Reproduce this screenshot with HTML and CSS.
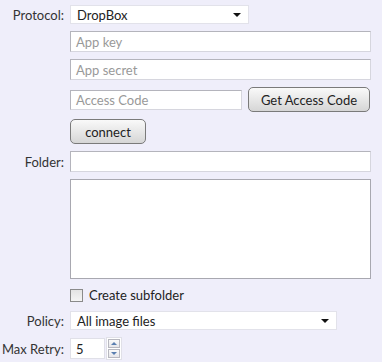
FILE: index.html
```html
<!DOCTYPE html>
<html lang="en">
  <head>
    <meta charset="UTF-8" />
    <title>Upload settings</title>
    <link rel="stylesheet" href="styles.css">
  </head>
  <body>
    <div class="form">
      <label class="label">Protocol:</label>
      <div class="select short">
        <span>DropBox</span>
        <span class="caret"></span>
      </div>

      <span></span>
      <div class="input wide placeholder">App key</div>

      <span></span>
      <div class="input wide placeholder">App secret</div>

      <span></span>
      <div class="access-row">
        <div class="input access placeholder">Access Code</div>
        <button class="btn get-code">Get Access Code</button>
      </div>

      <span></span>
      <div><button class="btn connect">connect</button></div>

      <label class="label">Folder:</label>
      <div class="input wide"></div>

      <span></span>
      <div class="textarea"></div>

      <span></span>
      <div class="check-row">
        <span class="checkbox"></span>
        <span>Create subfolder</span>
      </div>

      <label class="label">Policy:</label>
      <div class="select policy">
        <span>All image files</span>
        <span class="caret"></span>
      </div>

      <label class="label">Max Retry:</label>
      <div class="spin">
        <div class="spin-input">5</div>
        <div class="spin-buttons">
          <span class="spin-btn up"></span>
          <span class="spin-btn down"></span>
        </div>
      </div>
    </div>
  </body>
</html>
```

FILE: styles.css
```css
* {
  margin: 0;
  padding: 0;
  box-sizing: border-box;
}

body {
  background: #efeefa;
  font-family: Lato, "Open Sans", sans-serif;
  font-size: 13px;
  color: #333;
  width: 382px;
  height: 362px;
  overflow: hidden;
}

.form {
  display: grid;
  grid-template-columns: 64px 301px;
  column-gap: 6px;
  row-gap: 7px;
  padding-top: 5px;
  align-items: center;
}

.label {
  text-align: right;
  white-space: nowrap;
}

.select {
  height: 19px;
  background: #fff;
  border: 1px solid #e2e2ea;
  display: flex;
  align-items: center;
  justify-content: space-between;
  padding: 0 7px 0 6px;
  color: #222;
}

.select.short {
  width: 179px;
}

.select.policy {
  width: 267px;
}

.caret {
  width: 0;
  height: 0;
  border-left: 4px solid transparent;
  border-right: 4px solid transparent;
  border-top: 4px solid #111;
}

.input {
  height: 21px;
  background: #fff;
  border: 1px solid #d6d6de;
  border-top-color: #b4b4bc;
  border-left-color: #b4b4bc;
  padding: 0 5px;
  display: flex;
  align-items: center;
}

.input.wide {
  width: 301px;
}

.placeholder {
  color: #999;
}

.access-row {
  display: flex;
  align-items: center;
  gap: 6px;
}

.input.access {
  width: 172px;
  height: 20px;
}

.btn {
  height: 25px;
  border: 1px solid #7a7a7a;
  border-radius: 5px;
  background: linear-gradient(#f9f9f9, #d6d6d6);
  font-family: inherit;
  font-size: 13px;
  color: #222;
}

.btn.get-code {
  width: 122px;
}

.btn.connect {
  width: 76px;
}

.textarea {
  width: 301px;
  height: 100px;
  background: #fff;
  border: 1px solid #a8a8b0;
}

.check-row {
  display: flex;
  align-items: center;
  gap: 6px;
  height: 18px;
  color: #222;
}

.checkbox {
  width: 13px;
  height: 13px;
  border: 1px solid #8a8a8a;
  background: linear-gradient(#e4e4e4, #f4f4f4);
}

.spin {
  display: flex;
  align-items: center;
  gap: 1px;
}

.spin-input {
  width: 35px;
  height: 21px;
  background: #fff;
  border: 1px solid #e0e0e8;
  padding: 0 5px;
  display: flex;
  align-items: center;
  color: #222;
}

.spin-buttons {
  display: flex;
  flex-direction: column;
  gap: 1px;
  padding: 1px;
  background: #fff;
  border: 1px solid #e0e0e8;
}

.spin-btn {
  width: 12px;
  height: 9px;
  border: 1px solid #b8b8c0;
  background: linear-gradient(#fafafa, #e6e6ea);
  display: flex;
  align-items: center;
  justify-content: center;
}

.spin-btn::after {
  content: "";
  width: 0;
  height: 0;
  border-left: 3px solid transparent;
  border-right: 3px solid transparent;
}

.spin-btn.up::after {
  border-bottom: 3px solid #5a7fb0;
}

.spin-btn.down::after {
  border-top: 3px solid #5a7fb0;
}
```
